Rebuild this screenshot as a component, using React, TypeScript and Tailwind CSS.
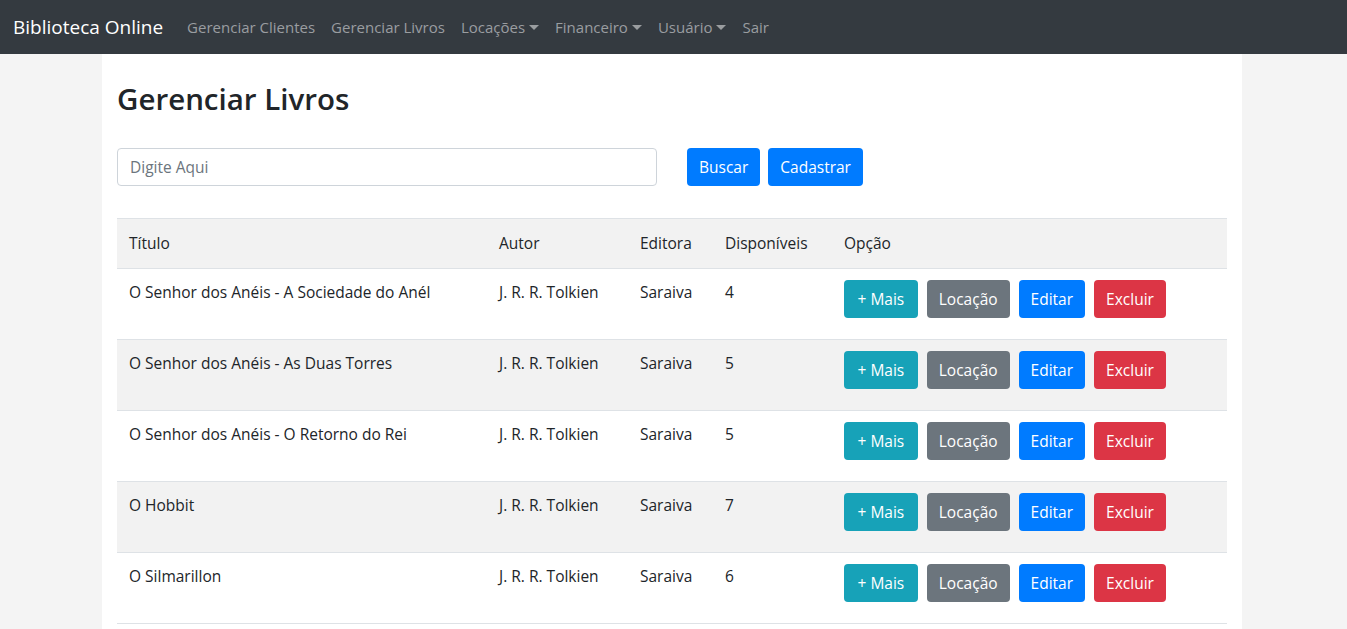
const NAV = [
  { label: "Gerenciar Clientes", caret: false },
  { label: "Gerenciar Livros", caret: false },
  { label: "Locações", caret: true },
  { label: "Financeiro", caret: true },
  { label: "Usuário", caret: true },
  { label: "Sair", caret: false },
];

const BOOKS = [
  { titulo: "O Senhor dos Anéis - A Sociedade do Anél", autor: "J. R. R. Tolkien", editora: "Saraiva", disp: 4 },
  { titulo: "O Senhor dos Anéis - As Duas Torres", autor: "J. R. R. Tolkien", editora: "Saraiva", disp: 5 },
  { titulo: "O Senhor dos Anéis - O Retorno do Rei", autor: "J. R. R. Tolkien", editora: "Saraiva", disp: 5 },
  { titulo: "O Hobbit", autor: "J. R. R. Tolkien", editora: "Saraiva", disp: 7 },
  { titulo: "O Silmarillon", autor: "J. R. R. Tolkien", editora: "Saraiva", disp: 6 },
];

const Caret = () => (
  <span className="ml-[4px] inline-block h-0 w-0 border-x-[5px] border-t-[5px] border-x-transparent border-t-current align-[3px]" />
);

const Navbar = () => (
  <nav className="flex h-[54px] items-center bg-[#343a40] px-[13px]">
    <span className="mr-[16px] text-[19px] text-white">Biblioteca Online</span>
    <ul className="flex items-center">
      {NAV.map((item) => (
        <li key={item.label} className="px-2 text-[15px] text-[#9a9da0]">
          {item.label}
          {item.caret && <Caret />}
        </li>
      ))}
    </ul>
  </nav>
);

const Btn = ({ color, children, px = "px-3" }: { color: string; children: React.ReactNode; px?: string }) => (
  <button className={`h-[38px] rounded-[4px] text-[15.5px] text-white ${px} ${color}`}>{children}</button>
);

export default function App() {
  return (
    <div className="min-h-screen bg-[#f4f4f4] font-['Segoe_UI','Open_Sans',sans-serif] text-[#212529]">
      <Navbar />
      <main className="ml-[102px] w-[1140px] bg-white px-[15px] pb-2">
        <h2 className="pt-[27px] pb-[32px] text-[29.5px] leading-[1.2] font-semibold">Gerenciar Livros</h2>

        <div className="flex items-center">
          <input
            placeholder="Digite Aqui"
            className="h-[38px] w-[540px] rounded-[4px] border border-[#ced4da] px-3 text-[15.5px] placeholder:text-[#6c757d]"
          />
          <div className="ml-[30px] flex gap-2">
            <Btn color="bg-[#007bff]">Buscar</Btn>
            <Btn color="bg-[#007bff]">Cadastrar</Btn>
          </div>
        </div>

        <table className="mt-[32px] w-full table-fixed border-collapse text-[15.5px]">
          <colgroup>
            <col className="w-[370px]" />
            <col className="w-[141px]" />
            <col className="w-[85px]" />
            <col className="w-[119px]" />
            <col />
          </colgroup>
          <thead>
            <tr className="h-[50px] border-y border-[#dee2e6] bg-[#f2f2f2] text-left">
              <th className="px-3 font-normal">Título</th>
              <th className="px-3 font-normal">Autor</th>
              <th className="px-3 font-normal">Editora</th>
              <th className="px-3 font-normal">Disponíveis</th>
              <th className="px-3 font-normal">Opção</th>
            </tr>
          </thead>
          <tbody>
            {BOOKS.map((b, i) => (
              <tr key={b.titulo} className={`h-[71px] border-b border-[#dee2e6] align-top ${i % 2 === 1 ? "bg-[#f2f2f2]" : ""}`}>
                <td className="px-3 pt-[12px]">{b.titulo}</td>
                <td className="px-3 pt-[12px]">{b.autor}</td>
                <td className="px-3 pt-[12px]">{b.editora}</td>
                <td className="px-3 pt-[12px]">{b.disp}</td>
                <td className="px-3 pt-[11px]">
                  <div className="flex gap-[9px]">
                    <Btn color="bg-[#17a2b8]" px="px-[13.5px]">+ Mais</Btn>
                    <Btn color="bg-[#6c757d]">Locação</Btn>
                    <Btn color="bg-[#007bff]">Editar</Btn>
                    <Btn color="bg-[#dc3545]">Excluir</Btn>
                  </div>
                </td>
              </tr>
            ))}
          </tbody>
        </table>
      </main>
    </div>
  );
}
